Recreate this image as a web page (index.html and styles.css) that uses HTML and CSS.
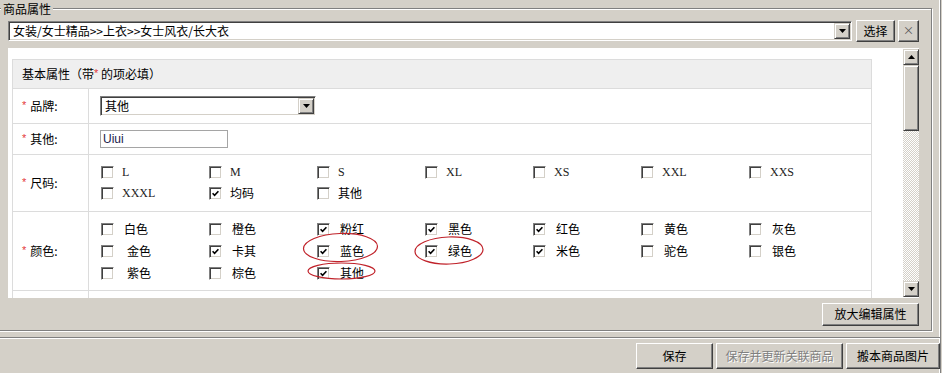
FILE: index.html
```html
<!DOCTYPE html>
<html lang="zh-CN">
<head>
<meta charset="utf-8">
<title>商品属性</title>
<link rel="stylesheet" href="styles.css">
</head>
<body>
<div class="window">
  <fieldset class="props">
    <legend>商品属性</legend>
    <div class="cat-row">
      <div class="combo combo-wide">
        <span class="combo-text">女装/女士精品&gt;&gt;上衣&gt;&gt;女士风衣/长大衣</span>
        <span class="drop-btn"><svg width="7" height="4" viewBox="0 0 7 4"><polygon points="0,0 7,0 3.5,4" fill="#000"/></svg></span>
      </div>
      <button class="btn btn-select">选择</button>
      <button class="btn btn-x">×</button>
    </div>

    <div class="scrollbox">
      <div class="scroll-content">
        <div class="attr">
          <div class="attr-head">基本属性<span class="paren">（</span>带<span class="req">*</span>&nbsp;的项必填<span class="paren">）</span></div>

          <div class="attr-row row-brand">
            <div class="attr-label"><span class="req">*</span>品牌:</div>
            <div class="attr-value">
              <div class="combo combo-brand">
                <span class="combo-text">其他</span>
                <span class="drop-btn"><svg width="7" height="4" viewBox="0 0 7 4"><polygon points="0,0 7,0 3.5,4" fill="#000"/></svg></span>
              </div>
            </div>
          </div>

          <div class="attr-row row-other">
            <div class="attr-label"><span class="req">*</span>其他:</div>
            <div class="attr-value">
              <div class="text-input">Uiui</div>
            </div>
          </div>

          <div class="attr-row row-size">
            <div class="attr-label"><span class="req">*</span>尺码:</div>
            <div class="attr-value checks-cell">
              <div class="checks checks-size">
                <label class="ck"><span class="cb"></span><span class="ck-text latin">L</span></label>
                <label class="ck"><span class="cb"></span><span class="ck-text latin">M</span></label>
                <label class="ck"><span class="cb"></span><span class="ck-text latin">S</span></label>
                <label class="ck"><span class="cb"></span><span class="ck-text latin">XL</span></label>
                <label class="ck"><span class="cb"></span><span class="ck-text latin">XS</span></label>
                <label class="ck"><span class="cb"></span><span class="ck-text latin">XXL</span></label>
                <label class="ck"><span class="cb"></span><span class="ck-text latin">XXS</span></label>
                <label class="ck"><span class="cb"></span><span class="ck-text latin">XXXL</span></label>
                <label class="ck"><span class="cb on"><svg width="7" height="7" viewBox="0 0 7 7"><path d="M0.6 3.2 L2.6 5.3 L6.4 1.2" fill="none" stroke="#000" stroke-width="1.6"/></svg></span><span class="ck-text">均码</span></label>
                <label class="ck"><span class="cb"></span><span class="ck-text">其他</span></label>
              </div>
            </div>
          </div>

          <div class="attr-row row-color">
            <div class="attr-label"><span class="req">*</span>颜色:</div>
            <div class="attr-value checks-cell">
              <div class="checks checks-color">
                <label class="ck"><span class="cb"></span><span class="ck-text">白色</span></label>
                <label class="ck"><span class="cb"></span><span class="ck-text">橙色</span></label>
                <label class="ck"><span class="cb on"><svg width="7" height="7" viewBox="0 0 7 7"><path d="M0.6 3.2 L2.6 5.3 L6.4 1.2" fill="none" stroke="#000" stroke-width="1.6"/></svg></span><span class="ck-text">粉红</span></label>
                <label class="ck"><span class="cb on"><svg width="7" height="7" viewBox="0 0 7 7"><path d="M0.6 3.2 L2.6 5.3 L6.4 1.2" fill="none" stroke="#000" stroke-width="1.6"/></svg></span><span class="ck-text">黑色</span></label>
                <label class="ck"><span class="cb on"><svg width="7" height="7" viewBox="0 0 7 7"><path d="M0.6 3.2 L2.6 5.3 L6.4 1.2" fill="none" stroke="#000" stroke-width="1.6"/></svg></span><span class="ck-text">红色</span></label>
                <label class="ck"><span class="cb"></span><span class="ck-text">黄色</span></label>
                <label class="ck"><span class="cb"></span><span class="ck-text">灰色</span></label>

                <label class="ck"><span class="cb"></span><span class="ck-text sp">金色</span></label>
                <label class="ck"><span class="cb on"><svg width="7" height="7" viewBox="0 0 7 7"><path d="M0.6 3.2 L2.6 5.3 L6.4 1.2" fill="none" stroke="#000" stroke-width="1.6"/></svg></span><span class="ck-text">卡其</span></label>
                <label class="ck"><span class="cb on"><svg width="7" height="7" viewBox="0 0 7 7"><path d="M0.6 3.2 L2.6 5.3 L6.4 1.2" fill="none" stroke="#000" stroke-width="1.6"/></svg></span><span class="ck-text">蓝色</span></label>
                <label class="ck"><span class="cb on"><svg width="7" height="7" viewBox="0 0 7 7"><path d="M0.6 3.2 L2.6 5.3 L6.4 1.2" fill="none" stroke="#000" stroke-width="1.6"/></svg></span><span class="ck-text">绿色</span></label>
                <label class="ck"><span class="cb on"><svg width="7" height="7" viewBox="0 0 7 7"><path d="M0.6 3.2 L2.6 5.3 L6.4 1.2" fill="none" stroke="#000" stroke-width="1.6"/></svg></span><span class="ck-text">米色</span></label>
                <label class="ck"><span class="cb"></span><span class="ck-text">驼色</span></label>
                <label class="ck"><span class="cb"></span><span class="ck-text">银色</span></label>

                <label class="ck"><span class="cb"></span><span class="ck-text sp">紫色</span></label>
                <label class="ck"><span class="cb"></span><span class="ck-text">棕色</span></label>
                <label class="ck"><span class="cb on"><svg width="7" height="7" viewBox="0 0 7 7"><path d="M0.6 3.2 L2.6 5.3 L6.4 1.2" fill="none" stroke="#000" stroke-width="1.6"/></svg></span><span class="ck-text">其他</span></label>
              </div>
            </div>
          </div>

          <div class="attr-row row-next">
            <div class="attr-label"></div>
            <div class="attr-value"></div>
          </div>
        </div>

        <svg class="marks" width="895" height="250" viewBox="0 0 895 250">
          <ellipse cx="332.5" cy="199.5" rx="37" ry="14" transform="rotate(-2 332.5 199.5)"/>
          <ellipse cx="441" cy="202.5" rx="34" ry="13.5" transform="rotate(-2 441 202.5)"/>
          <ellipse cx="333.5" cy="223" rx="33.5" ry="8"/>
        </svg>
      </div>

      <div class="vscroll">
        <span class="sb-btn"><svg width="7" height="4" viewBox="0 0 7 4"><polygon points="3.5,0 7,4 0,4" fill="#000"/></svg></span>
        <span class="sb-thumb"></span>
        <span class="sb-track"></span>
        <span class="sb-btn"><svg width="7" height="4" viewBox="0 0 7 4"><polygon points="0,0 7,0 3.5,4" fill="#000"/></svg></span>
      </div>
    </div>

    <div class="zoom-row">
      <button class="btn btn-zoom">放大编辑属性</button>
    </div>
  </fieldset>

  <div class="footer">
    <button class="btn btn-save">保存</button>
    <button class="btn btn-update" disabled>保存并更新关联商品</button>
    <button class="btn btn-move">搬本商品图片</button>
  </div>
</div>
</body>
</html>
```

FILE: styles.css
```css
* { box-sizing: border-box; }

html, body {
  margin: 0;
  padding: 0;
}

body {
  width: 942px;
  height: 373px;
  overflow: hidden;
  background: #d4d0c8;
  color: #000;
  font: 12px/1.2 "Noto Sans CJK SC", "Liberation Sans", sans-serif;
}

.window {
  width: 941px;
  height: 373px;
  border-right: 1px solid #808080;
  box-shadow: inset -1px 0 #fff;
}

/* ---------- fieldset ---------- */
.props {
  margin: 0 8px 0 -4px;
  padding: 3px 12px 4px 11px;
  border: 1px solid #808080;
  box-shadow: inset 1px 1px #fff, 1px 1px #fff;
  min-width: 0;
}

.props legend {
  margin-left: -7px;
  padding: 0 2px;
  line-height: 17px;
  background: #d4d0c8;
}

/* ---------- 3D primitives ---------- */
.btn {
  font: inherit;
  color: #000;
  background: #d4d0c8;
  border: 1px solid;
  border-color: #fff #404040 #404040 #fff;
  box-shadow: inset -1px -1px #808080, inset 1px 1px #d4d0c8;
  padding: 0;
  cursor: default;
}

.btn:disabled {
  color: #808080;
  text-shadow: 1px 1px #fff;
}

.combo {
  display: flex;
  align-items: center;
  background: #fff;
  border: 1px solid;
  border-color: #808080 #fff #fff #808080;
  box-shadow: inset 1px 1px #404040, inset -1px -1px #d4d0c8;
  padding: 0 1px 0 1px;
}

.combo-text {
  flex: 1;
  padding-left: 3px;
  line-height: 16px;
  white-space: nowrap;
}

.drop-btn {
  width: 16px;
  height: 16px;
  flex: none;
  display: flex;
  align-items: center;
  justify-content: center;
  background: #d4d0c8;
  border: 1px solid;
  border-color: #d4d0c8 #404040 #404040 #d4d0c8;
  box-shadow: inset 1px 1px #fff, inset -1px -1px #808080;
}

/* ---------- category row ---------- */
.cat-row {
  display: flex;
  align-items: center;
  height: 22px;
}

.combo-wide {
  flex: 1;
  height: 20px;
  margin-right: 4px;
}

.btn-select {
  width: 39px;
  height: 22px;
  margin-right: 3px;
}

.btn-x {
  width: 21px;
  height: 22px;
  color: #555;
  font-size: 11px;
}

/* ---------- scroll box ---------- */
.scrollbox {
  display: flex;
  height: 250px;
  margin-top: 6px;
  background: #fff;
}

.scroll-content {
  position: relative;
  flex: 1;
  overflow: hidden;
  padding: 11px 0 0 4px;
}

.vscroll {
  width: 16px;
  display: flex;
  flex-direction: column;
  padding: 1px 0;
}

.sb-btn {
  height: 16px;
  display: flex;
  align-items: center;
  justify-content: center;
  background: #d4d0c8;
  border: 1px solid;
  border-color: #d4d0c8 #404040 #404040 #d4d0c8;
  box-shadow: inset 1px 1px #fff, inset -1px -1px #808080;
}

.sb-thumb {
  height: 66px;
  background: #d4d0c8;
  border: 1px solid;
  border-color: #d4d0c8 #404040 #404040 #d4d0c8;
  box-shadow: inset 1px 1px #fff, inset -1px -1px #808080;
}

.sb-track {
  flex: 1;
  background: repeating-conic-gradient(#d4d0c8 0 25%, #fff 0 50%) 0 0 / 2px 2px;
}

/* ---------- attribute table ---------- */
.attr {
  width: 860px;
  border: 1px solid #dcdcdc;
}

.attr-head {
  height: 28px;
  display: flex;
  align-items: center;
  padding-left: 9px;
  background: #efefef;
  color: #000;
}

.attr-row {
  display: grid;
  grid-template-columns: 76px 1fr;
  border-top: 1px solid #dcdcdc;
}

.row-brand { height: 35px; }
.row-other { height: 31px; }
.row-size  { height: 57px; }
.row-color { height: 79px; }
.row-next  { height: 40px; }

.attr-label {
  display: flex;
  align-items: center;
  padding-left: 9px;
  border-right: 1px solid #dcdcdc;
}

.req {
  color: #e4393c;
  font-family: "Liberation Sans", sans-serif;
  font-size: 11px;
  margin-right: 4px;
}

.attr-head .req {
  margin-right: 0;
}

.attr-value {
  display: flex;
  align-items: center;
  padding-left: 11px;
}

.combo-brand {
  width: 216px;
  height: 20px;
}

.text-input {
  width: 128px;
  height: 18px;
  border: 1px solid #a5a5a5;
  padding-left: 2px;
  line-height: 16px;
  font-family: "Liberation Sans", sans-serif;
  color: #1b1b4a;
}

/* ---------- checkboxes ---------- */
.checks-cell {
  align-items: flex-start;
  padding-left: 12px;
}

.checks {
  display: grid;
  grid-template-columns: repeat(7, 108px);
}

.checks-size {
  padding-top: 7px;
  grid-auto-rows: 21px;
}

.checks-color {
  padding-top: 6px;
  grid-auto-rows: 22px;
}

.ck {
  display: flex;
  align-items: center;
}

.cb {
  width: 13px;
  height: 13px;
  flex: none;
  display: flex;
  align-items: center;
  justify-content: center;
  background: #fff;
  border: 1px solid;
  border-color: #808080 #fff #fff #808080;
  box-shadow: inset 1px 1px #404040, inset -1px -1px #d4d0c8;
}

.ck-text {
  margin-left: 8px;
  white-space: nowrap;
}

.checks-color .ck-text {
  margin-left: 10px;
}

.checks-color .ck-text.sp {
  padding-left: 3px;
}

.latin {
  font-family: "Liberation Serif", serif;
  color: #222;
}

/* ---------- annotation marks ---------- */
.marks {
  position: absolute;
  left: 0;
  top: 0;
  pointer-events: none;
}

.marks ellipse {
  fill: none;
  stroke: #c0222a;
  stroke-width: 1.2;
}

/* ---------- bottom rows ---------- */
.zoom-row {
  display: flex;
  justify-content: flex-end;
  margin-top: 5px;
}

.btn-zoom {
  width: 97px;
  height: 23px;
}

.footer {
  display: flex;
  justify-content: flex-end;
  gap: 3px;
  margin-top: 6px;
  padding-top: 5px;
  border-top: 1px solid #808080;
  box-shadow: inset 0 1px #fff;
}

.footer .btn {
  height: 26px;
}

.btn-save { width: 77px; }
.btn-update { width: 127px; }
.btn-move { width: 94px; }
```
